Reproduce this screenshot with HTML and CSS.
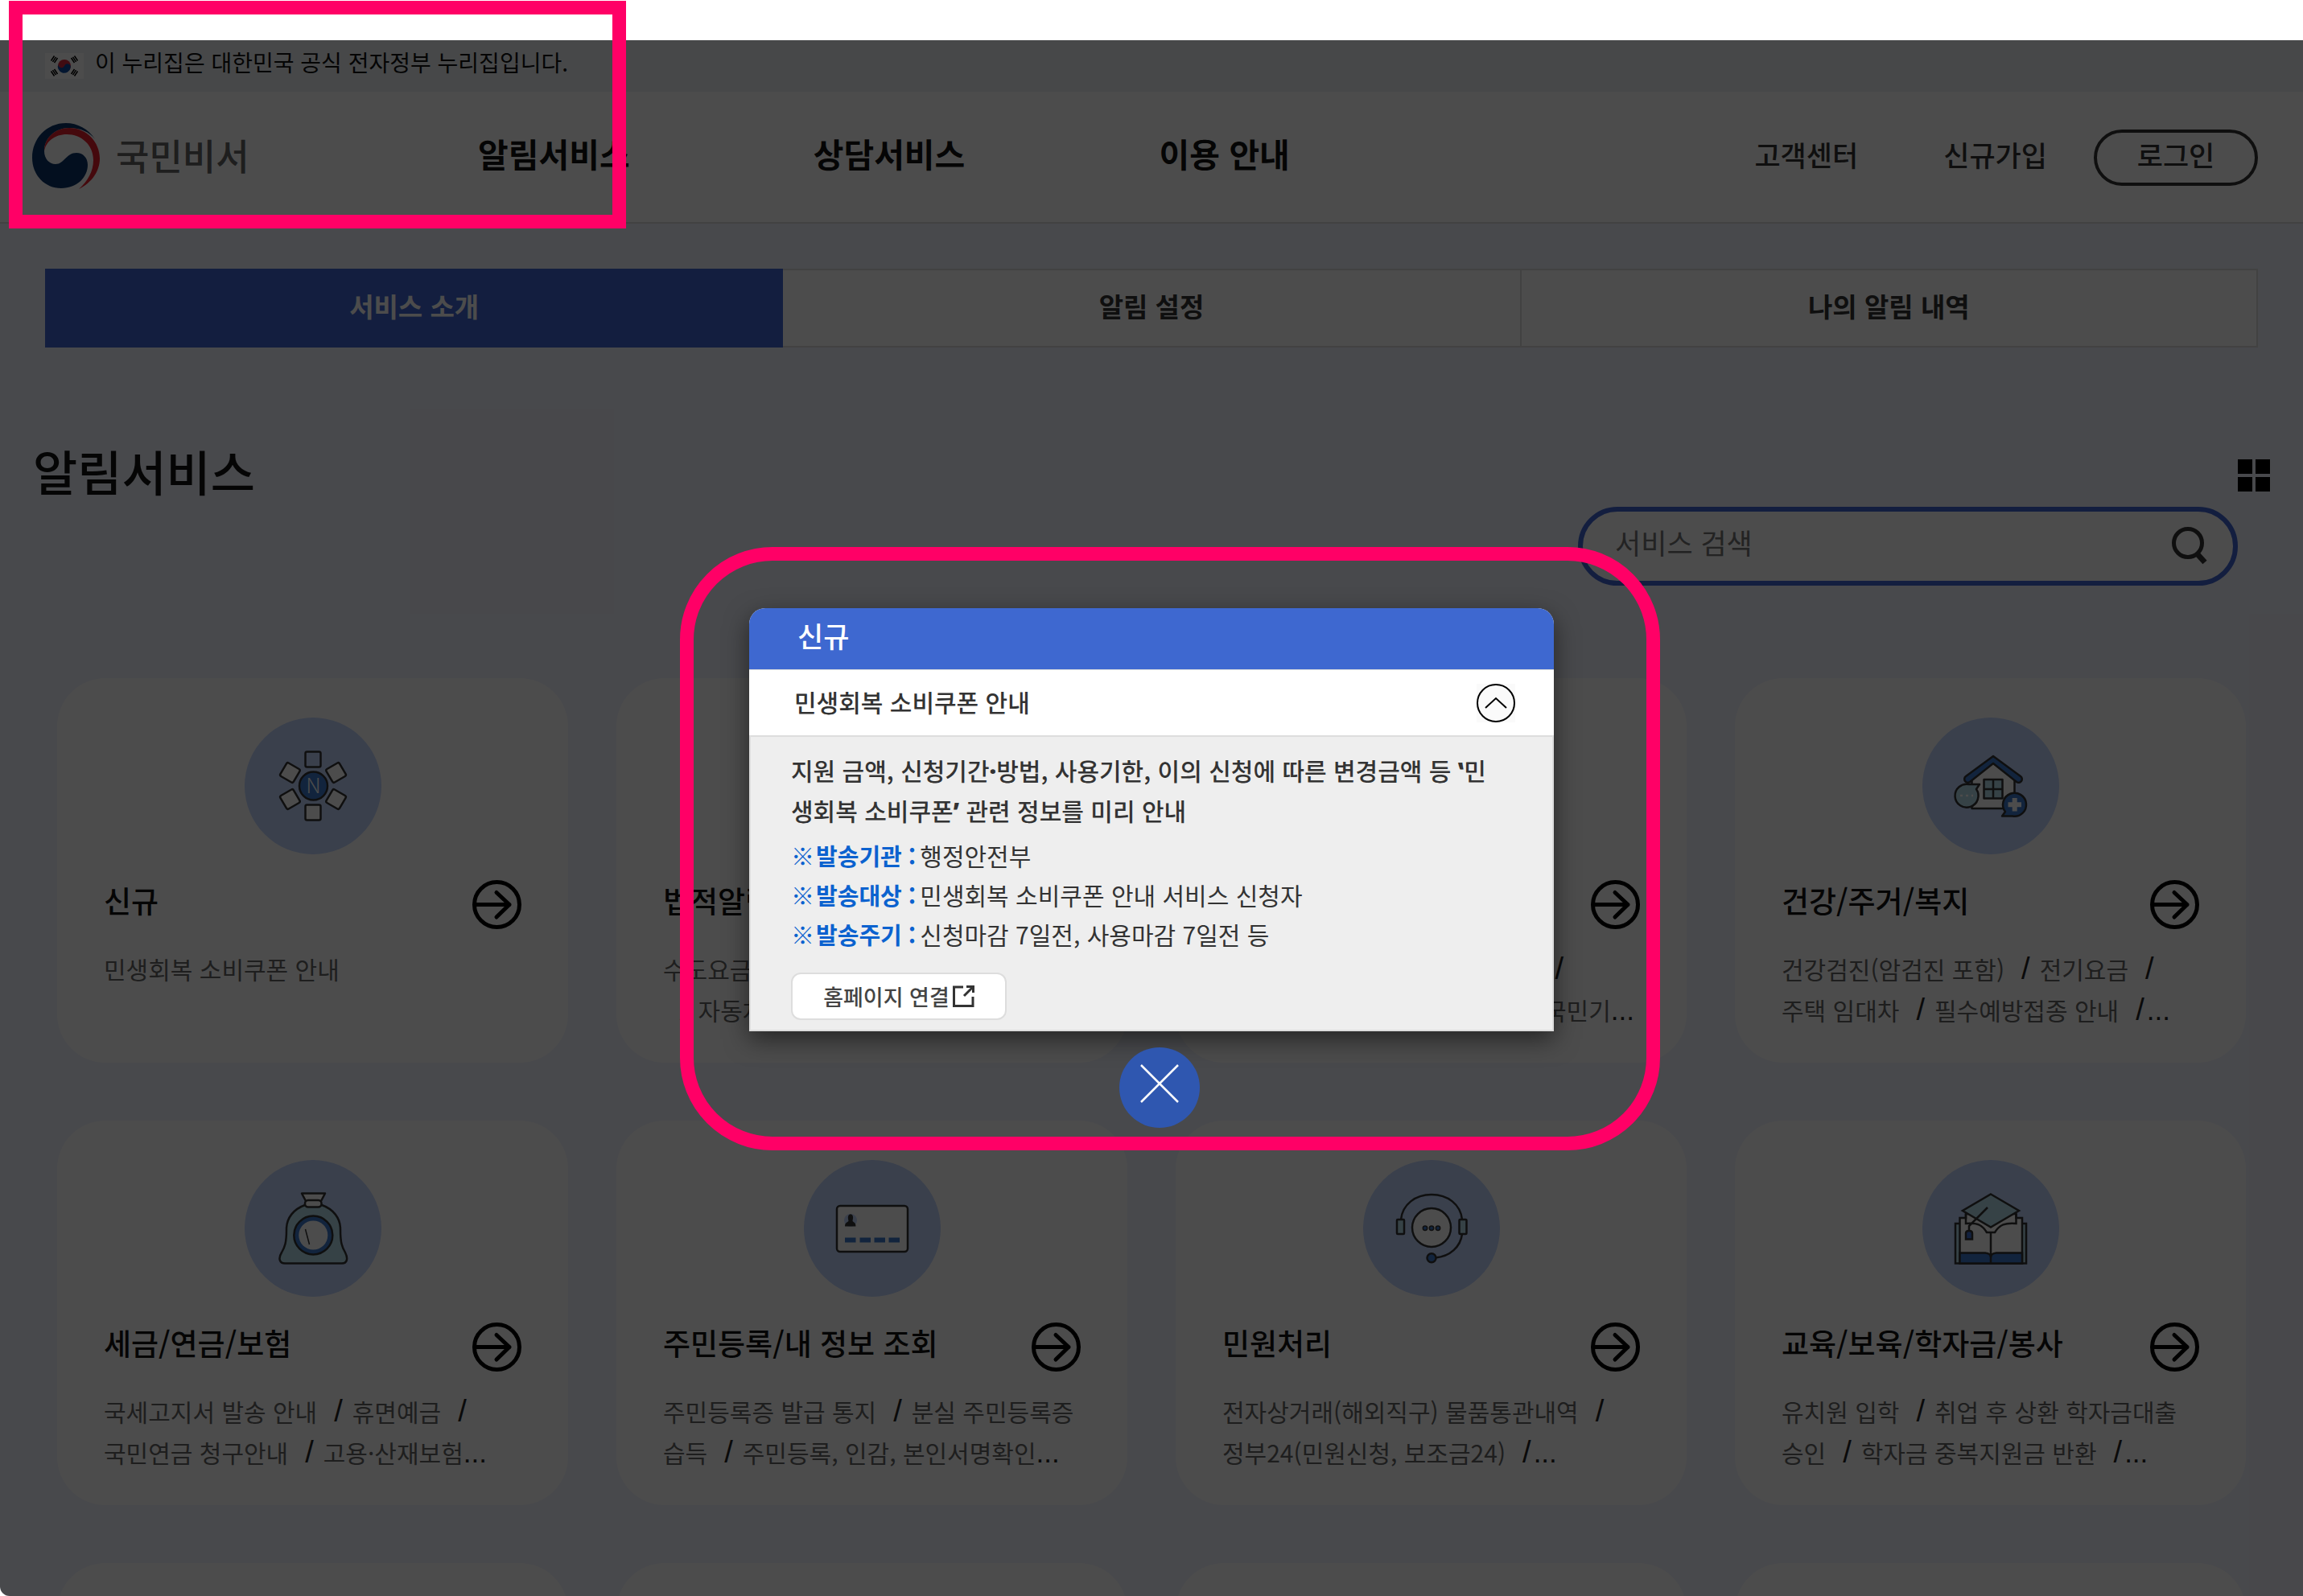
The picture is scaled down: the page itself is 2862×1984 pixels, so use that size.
FILE: index.html
```html
<!DOCTYPE html>
<html lang="ko">
<head>
    <meta charset="utf-8">
    <title>국민비서 - 알림서비스</title>
    <link rel="stylesheet" href="styles.css">
</head>
<body>
    <svg width="0" height="0" class="defs" aria-hidden="true">
        <symbol id="arrow" viewBox="0 0 61 61">
            <g fill="none" stroke="#000" stroke-width="5" stroke-linecap="round" stroke-linejoin="round">
                <circle cx="30.500" cy="30.500" r="28"/>
                <path d="M4 30.500H46M30 15.500L46 30.500L30 46"/>
            </g>
        </symbol>
    </svg>

    <div class="site">
        <div class="gov-bar">
            <svg class="flag" viewBox="0 0 48 32" aria-hidden="true">
                <rect width="48" height="32" fill="#fff"/>
                <circle cx="24" cy="16" r="8" fill="#d62b3f"/>
                <path d="M16.500 13.500A4 4 0 0 0 24 16A4 4 0 0 1 31.700 18A8 8 0 1 1 16.500 13.500Z" fill="#0b4ba0"/>
                <g stroke="#000" stroke-width="1.500">
                    <path d="M7.500 9.500L11.500 3.500M9.500 10.800L13.500 4.800M11.500 12L15.500 6"/>
                    <path d="M40.500 9.500L36.500 3.500M38.500 10.800L34.500 4.800M36.500 12L32.500 6"/>
                    <path d="M7.500 22.500L11.500 28.500M9.500 21.200L13.500 27.200M11.500 20L15.500 26"/>
                    <path d="M40.500 22.500L36.500 28.500M38.500 21.200L34.500 27.200M36.500 20L32.500 26"/>
                </g>
            </svg>
            <span>이 누리집은 대한민국 공식 전자정부 누리집입니다.</span>
        </div>

        <header class="header">
            <a class="logo" href="#">
                <svg class="logo-mark" viewBox="0 0 84 84" aria-hidden="true">
                    <path fill="#0b3568" d="M78 20C70 7 56 0 42 0C18 0 0 19 0 43C0 65 16 81 36 81C56 81 69 67 69 52C69 43 63 37 55 37C42 37 40 51 29 51C21 51 15 44 15 35C15 18 29 6 46 6C60 6 71 11 78 20Z"/>
                    <path fill="#e6202c" d="M15 35C15 18 29 6 46 6C68 6 84 24 84 44C84 60 74 74 58 82C69 72 76 60 76 46C76 27 61 14 43 14C28 14 17 23 15 35Z"/>
                </svg>
                <span>국민비서</span>
            </a>
            <nav class="nav">
                <a href="#">알림서비스</a>
                <a href="#">상담서비스</a>
                <a href="#">이용 안내</a>
            </nav>
            <div class="util">
                <a href="#">고객센터</a>
                <a href="#">신규가입</a>
                <button class="login" type="button">로그인</button>
            </div>
        </header>

        <main class="main">
            <nav class="tabs">
                <a class="tab active" href="#">서비스 소개</a>
                <a class="tab" href="#">알림 설정</a>
                <a class="tab" href="#">나의 알림 내역</a>
            </nav>

            <div class="title-row">
                <h1>알림서비스</h1>
                <button class="grid-button" type="button" aria-label="전체 보기">
                    <svg viewBox="0 0 40 40"><path d="M0 0h18v18H0zM22 0h18v18H22zM0 22h18v18H0zM22 22h18v18H22z"/></svg>
                </button>
            </div>

            <form class="search">
                <input type="text" placeholder="서비스 검색" aria-label="서비스 검색">
                <button type="button" aria-label="검색">
                    <svg viewBox="0 0 44 48" fill="none" stroke="#333">
                        <circle cx="20" cy="20" r="17.500" stroke-width="5"/>
                        <path d="M31 33L41 44" stroke-width="7"/>
                    </svg>
                </button>
            </form>

            <div class="cards">
                <section class="card">
                    <svg class="card-icon" viewBox="0 0 170 170" fill="#fff" stroke="#333" stroke-width="2.500">
                        <rect x="75.500" y="42.500" width="19" height="19" rx="2" fill="#c1d5fd"/>
                        <rect x="75.500" y="42.500" width="19" height="19" rx="2" transform="rotate(60 85 85)"/>
                        <rect x="75.500" y="42.500" width="19" height="19" rx="2" transform="rotate(120 85 85)"/>
                        <rect x="75.500" y="42.500" width="19" height="19" rx="2" transform="rotate(180 85 85)"/>
                        <rect x="75.500" y="42.500" width="19" height="19" rx="2" transform="rotate(240 85 85)"/>
                        <rect x="75.500" y="42.500" width="19" height="19" rx="2" transform="rotate(300 85 85)"/>
                        <circle cx="85.500" cy="85" r="17.500" fill="#3d7acc"/>
                        <text class="icon-letter" x="85.500" y="94" stroke="none">N</text>
                    </svg>
                    <div class="card-head">
                        <h2>신규</h2>
                        <a href="#" aria-label="신규 보기"><svg><use href="#arrow"/></svg></a>
                    </div>
                    <p>민생회복 소비쿠폰 안내</p>
                </section>

                <section class="card">
                    <svg class="card-icon" viewBox="0 0 170 170"></svg>
                    <div class="card-head">
                        <h2>법적알림</h2>
                        <a href="#" aria-label="법적알림 보기"><svg><use href="#arrow"/></svg></a>
                    </div>
                    <p>수도요금<br><i class="slash">/</i>자동차</p>
                </section>

                <section class="card">
                    <svg class="card-icon" viewBox="0 0 170 170"></svg>
                    <div class="card-head">
                        <a href="#" aria-label="교통 보기"><svg><use href="#arrow"/></svg></a>
                    </div>
                    <p>교통범칙금 과태료 통지 안내 등<i class="slash">/</i><br>운전면허 적성검사 갱신 안내<i class="slash">/</i>국민기<i class="more">...</i></p>
                </section>

                <section class="card">
                    <svg class="card-icon" viewBox="0 0 170 170" stroke="#333" stroke-width="2.500" stroke-linejoin="round">
                        <path fill="#fff" d="M61.500 70L88 52L114.500 70V113H61.500Z"/>
                        <path fill="#3d7acc" d="M88 48L54 73A4 4 0 0 0 59 80L88 57L117 80A4 4 0 0 0 122 73Z"/>
                        <path fill="#b4dcec" d="M76.500 77H99.500V100.500H76.500ZM88 77V100.500M76.500 89H99.500"/>
                        <path fill="#b4dcec" d="M58 83H71L67 89A14.500 14.500 0 1 1 58 83Z"/>
                        <path fill="#3d7acc" d="M112 122.500H99L103 117A14.500 14.500 0 1 1 112 122.500Z"/>
                        <path fill="none" stroke="#fff" stroke-width="6" stroke-linejoin="miter" d="M114.700 100V116.500M106.500 108.200H123"/>
                        <path fill="none" stroke="#fff" stroke-dasharray="3 4" d="M47 97H63"/>
                    </svg>
                    <div class="card-head">
                        <h2>건강/주거/복지</h2>
                        <a href="#" aria-label="건강/주거/복지 보기"><svg><use href="#arrow"/></svg></a>
                    </div>
                    <p>건강검진(암검진 포함)<i class="slash">/</i>전기요금<i class="slash">/</i><br>주택 임대차<i class="slash">/</i>필수예방접종 안내<i class="slash last">/</i><i class="more">...</i></p>
                </section>

                <section class="card">
                    <svg class="card-icon" viewBox="0 0 170 170" fill="none" stroke="#333" stroke-width="2.500" stroke-linejoin="round">
                        <path fill="#b4dcec" d="M75 56C61 61 52 72 52 86C52 103 50 108 46 115C41 123 44 128.500 50 128.500H121C127 128.500 129 123 125 115C121 108 119 103 119 86C119 72 110 61 96 56Z"/>
                        <path fill="#fff" d="M71 41.500H100L95 51H76Z"/>
                        <rect x="75" y="50" width="20.500" height="8.500" rx="4" fill="#fff"/>
                        <circle cx="85.300" cy="93.500" r="24" fill="#3d7acc"/>
                        <circle cx="85.300" cy="93.500" r="18" fill="#fff" stroke="none"/>
                        <path stroke-width="1.500" d="M75.500 86L80.500 105"/>
                    </svg>
                    <div class="card-head">
                        <h2>세금/연금/보험</h2>
                        <a href="#" aria-label="세금/연금/보험 보기"><svg><use href="#arrow"/></svg></a>
                    </div>
                    <p>국세고지서 발송 안내<i class="slash">/</i>휴면예금<i class="slash">/</i><br>국민연금 청구안내<i class="slash">/</i>고용·산재보험<i class="more">...</i></p>
                </section>

                <section class="card">
                    <svg class="card-icon" viewBox="0 0 170 170">
                        <rect x="41" y="57" width="88" height="57" rx="4" fill="#fff" stroke="#333" stroke-width="2.500"/>
                        <circle cx="58" cy="75" r="8" fill="#c1d5fd"/>
                        <path fill="#333" d="M51 82.500C51 77 55 77.500 55.500 75.500C54 70 55.500 67.500 58 67.500C60.500 67.500 62 70 60.500 75.500C61 77.500 64.500 77 64.500 82.500Z"/>
                        <path fill="#3d7acc" d="M51 96.500h13.500v6H51zM69.500 96.500H83v6H69.500zM87.500 96.500H101v6H87.500zM105.500 96.500H119v6h-13.500z"/>
                    </svg>
                    <div class="card-head">
                        <h2>주민등록/내 정보 조회</h2>
                        <a href="#" aria-label="주민등록/내 정보 조회 보기"><svg><use href="#arrow"/></svg></a>
                    </div>
                    <p>주민등록증 발급 통지<i class="slash">/</i>분실 주민등록증<br>습득<i class="slash">/</i>주민등록, 인감, 본인서명확인<i class="more">...</i></p>
                </section>

                <section class="card">
                    <svg class="card-icon" viewBox="0 0 170 170" fill="none" stroke="#333" stroke-width="2.500">
                        <path d="M47 74C49 55 65 43 85 43C105 43 121 55 123 74M123 92C121 108 108 120 90 121.500"/>
                        <circle cx="85" cy="84" r="24" fill="#fff"/>
                        <rect x="42" y="74" width="9" height="18" rx="1" fill="#b4dcec"/>
                        <rect x="119.500" y="74" width="9" height="18" rx="1" fill="#b4dcec"/>
                        <circle cx="85" cy="121.700" r="5.500" fill="#3d7acc"/>
                        <g fill="#3d7acc" stroke-width="1.500">
                            <circle cx="77" cy="84.700" r="2.700"/>
                            <circle cx="85" cy="84.700" r="2.700"/>
                            <circle cx="93" cy="84.700" r="2.700"/>
                        </g>
                    </svg>
                    <div class="card-head">
                        <h2>민원처리</h2>
                        <a href="#" aria-label="민원처리 보기"><svg><use href="#arrow"/></svg></a>
                    </div>
                    <p>전자상거래(해외직구) 물품통관내역<i class="slash">/</i><br>정부24(민원신청, 보조금24)<i class="slash last">/</i><i class="more">...</i></p>
                </section>

                <section class="card">
                    <svg class="card-icon" viewBox="0 0 170 170" fill="#fff" stroke="#333" stroke-width="2.500">
                        <rect x="41" y="79" width="88" height="49.500" fill="#b4dcec"/>
                        <path d="M46.500 72H54V67H116.500V72H124V128.500H46.500Z"/>
                        <path fill="#3d7acc" d="M46.500 115.500H78Q85 116 85 121Q85 116 92 115.500H124V128.500H46.500Z"/>
                        <path fill="none" d="M54 67V79C68 78 74 80 80 90H90C96 80 103 78 116.500 79V67M85 90V128.500"/>
                        <path fill="#b4dcec" d="M85 42.500L120 63L85 83.500L50 63Z"/>
                        <path fill="none" d="M81 59L58 82V88"/>
                        <path fill="#3d6fd0" d="M54 98.500V91Q54 88 58 88Q62 88 62 91V98.500Z"/>
                    </svg>
                    <div class="card-head">
                        <h2>교육/보육/학자금/봉사</h2>
                        <a href="#" aria-label="교육/보육/학자금/봉사 보기"><svg><use href="#arrow"/></svg></a>
                    </div>
                    <p>유치원 입학<i class="slash">/</i>취업 후 상환 학자금대출<br>승인<i class="slash">/</i>학자금 중복지원금 반환<i class="slash last">/</i><i class="more">...</i></p>
                </section>

                <section class="card"></section>
                <section class="card"></section>
                <section class="card"></section>
                <section class="card"></section>
            </div>
        </main>

        <!-- popup -->
        <div class="dim">
            <div class="popup" role="dialog" aria-labelledby="popup-title">
                <h2 class="popup-title" id="popup-title">신규</h2>
                <div class="popup-item">
                    <h3>민생회복 소비쿠폰 안내</h3>
                    <button class="fold" type="button" aria-label="접기">
                        <svg viewBox="0 0 48 48" fill="none" stroke="#000" stroke-width="2">
                            <circle cx="24" cy="24" r="23"/>
                            <path d="M11 30L24 18L37 30"/>
                        </svg>
                    </button>
                </div>
                <div class="popup-body">
                    <p class="lead">지원 금액, 신청기간<span class="mark">·</span>방법, 사용기한, 이의 신청에 따른 변경금액 등 <span class="mark">‛</span>민<br>생회복 소비쿠폰<span class="mark">’</span> 관련 정보를 미리 안내</p>
                    <dl>
                        <div><dt><span>※</span> 발송기관 :</dt><dd>행정안전부</dd></div>
                        <div><dt><span>※</span> 발송대상 :</dt><dd>민생회복 소비쿠폰 안내 서비스 신청자</dd></div>
                        <div><dt><span>※</span> 발송주기 :</dt><dd>신청마감 7일전, 사용마감 7일전 등</dd></div>
                    </dl>
                    <a class="home-link" href="#">
                        홈페이지 연결
                        <svg viewBox="0 0 27 27" fill="none" stroke="#333" stroke-width="3">
                            <path d="M13 2H1.500V25.500H25V14M17 1.500H25.500V9M25 2L14 13"/>
                        </svg>
                    </a>
                </div>
            </div>
            <button class="close" type="button" aria-label="닫기">
                <svg viewBox="0 0 48 48" stroke="#fff" stroke-width="2.500"><path d="M1 1L47 47M47 1L1 47"/></svg>
            </button>
        </div>
    </div>

    <!-- highlights -->
    <div class="highlight highlight-logo"></div>
    <div class="highlight highlight-popup"></div>
</body>
</html>
```

FILE: styles.css
```css
* {
    box-sizing: border-box;
}

body {
    margin: 0;
    padding-top: 50px;
    height: 100vh;
    overflow: hidden;
    position: relative;
    background: #fff;
    color: #111;
    font-family: "Noto Sans CJK KR", "Noto Sans", sans-serif;
}

h1, h2, h3, p, dl, dd {
    margin: 0;
}

a {
    color: inherit;
    text-decoration: none;
}

button {
    padding: 0;
    border: 0;
    background: none;
    font-family: inherit;
    cursor: pointer;
}

svg {
    display: block;
}

.defs {
    position: absolute;
}

.site {
    position: relative;
    height: 100%;
    overflow: hidden;
    background: #f0f3fd;
    border-bottom-left-radius: 12px;
}

/* top */
.gov-bar {
    display: flex;
    align-items: center;
    gap: 14px;
    height: 64px;
    padding: 0 56px;
    background: #edf2f6;
    font-size: 28px;
    line-height: 52px;
}

.gov-bar span {
    height: 62px;
}

.flag {
    width: 48px;
    height: 32px;
}

.header {
    display: flex;
    align-items: center;
    height: 164px;
    padding: 0 56px 0 40px;
    background: #fff;
    border-bottom: 2px solid #ddd;
}

.logo {
    display: flex;
    align-items: center;
    gap: 20px;
    width: 440px;
    color: #666;
    font-size: 45px;
    font-weight: 500;
    line-height: 60px;
}

.logo span {
    padding-bottom: 4px;
}

.logo-mark {
    width: 84px;
    height: 84px;
}

.nav {
    display: grid;
    grid-template-columns: repeat(3, 1fr);
    flex: 0 1 1250px;
    text-align: center;
    font-size: 41px;
    font-weight: 700;
    line-height: 60px;
    padding-bottom: 10px;
}

.util {
    display: flex;
    align-items: center;
    gap: 58px;
    margin-left: auto;
    color: #333;
    font-size: 35px;
    font-weight: 500;
    line-height: 60px;
}

.util a {
    padding-bottom: 6px;
}

.util a:first-child {
    margin-right: 48px;
}

.login {
    width: 204px;
    height: 70px;
    margin-top: 2px;
    padding-bottom: 8px;
    border: 4px solid #333;
    border-radius: 35px;
    color: #333;
    font-size: 35px;
    font-weight: 500;
    line-height: 54px;
}

/* content */
.main {
    padding: 56px 41px 0;
}

.tabs {
    display: grid;
    grid-template-columns: repeat(3, 1fr);
    margin: 0 15px;
    background: #fff;
    border: 2px solid #ddd;
}

.tab {
    height: 94px;
    border-left: 2px solid #ddd;
    text-align: center;
    color: #333;
    font-size: 33px;
    font-weight: 700;
    line-height: 88px;
}

.tab.active {
    margin: -2px 0 -2px -2px;
    height: 98px;
    border: 0;
    background: #4067d2;
    color: #fff;
    line-height: 92px;
}

.tab.active + .tab {
    border-left: 0;
}

.title-row {
    display: flex;
    align-items: center;
    justify-content: space-between;
    margin-top: 113px;
}

h1 {
    font-size: 60px;
    font-weight: 500;
    line-height: 80px;
}

.grid-button {
    width: 40px;
    margin-top: 12px;
}

.search {
    display: flex;
    align-items: center;
    width: 820px;
    height: 98px;
    margin: 5px 40px 0 auto;
    padding: 0 32px 0 40px;
    background: #fff;
    border: 6px solid #4067d2;
    border-radius: 49px;
}

.search input {
    flex: 1;
    min-width: 0;
    height: 70px;
    padding: 0 0 12px;
    border: 0;
    outline: 0;
    background: none;
    font-family: inherit;
    font-size: 35px;
}

.search input::placeholder {
    color: #757575;
}

.search button {
    width: 44px;
}

.cards {
    display: grid;
    grid-template-columns: repeat(4, minmax(0, 1fr));
    grid-auto-rows: 478px;
    gap: 72px 60px;
    padding: 115px 30px 0;
}

.card {
    padding: 49px 58px 0;
    background: #fff;
    border-radius: 60px;
}

.card-icon {
    width: 170px;
    height: 170px;
    margin: 0 auto 32px;
    border-radius: 50%;
    background: #c1d5fd;
}

.icon-letter {
    font-size: 26px;
    font-weight: 300;
    text-anchor: middle;
}

.card-head {
    display: flex;
    justify-content: space-between;
    height: 61px;
}

.card-head h2 {
    font-size: 37px;
    font-weight: 500;
    line-height: 50px;
}

.card-head a {
    margin-left: auto;
}

.card-head svg {
    width: 61px;
    height: 61px;
}

.card p {
    margin-top: 24px;
    color: #666;
    font-size: 30px;
    line-height: 51px;
    white-space: nowrap;
}

.slash,
.more {
    color: #222;
    font-family: "Liberation Sans", sans-serif;
    font-size: 38px;
    font-style: normal;
    line-height: 1px;
}

.slash {
    margin: 0 12px 0 21px;
}

.slash.last {
    margin-right: 3px;
}

.more {
    font-size: 35px;
}

/* popup */
.dim {
    position: absolute;
    inset: 0;
    display: flex;
    flex-direction: column;
    align-items: center;
    padding-top: 706px;
    background: rgba(0, 0, 0, 0.7);
}

.popup {
    width: 1000px;
    color: #333;
    background: #eee;
    border-radius: 20px 20px 0 0;
    box-shadow: 0 10px 30px rgba(0, 0, 0, 0.5);
}

.popup-title {
    height: 76px;
    padding-left: 60px;
    background: #3e68d0;
    border-radius: 20px 20px 0 0;
    color: #fff;
    font-size: 35px;
    font-weight: 500;
    line-height: 68px;
}

.popup-item {
    display: flex;
    align-items: center;
    justify-content: space-between;
    height: 82px;
    padding: 0 48px 0 56px;
    background: #fff;
    border-top: 1px solid #ddd;
}

.popup-item h3 {
    padding-bottom: 4px;
    font-size: 30px;
    font-weight: 500;
    line-height: 74px;
}

.fold {
    width: 48px;
    background: #fafafa;
}

.popup-body {
    padding: 17px 50px 12px;
    border: 2px solid #ddd;
    font-size: 30px;
    line-height: 49px;
    white-space: nowrap;
}

.lead {
    font-weight: 500;
    line-height: 48px;
}

.mark {
    font-family: "Open Sans", sans-serif;
    font-weight: 800;
}

.popup-body dl {
    margin: 6px 0 23px;
}

.popup-body dl div {
    display: flex;
}

.popup-body dt {
    display: flex;
    gap: 2px;
    margin-right: 5px;
    color: #0b62cf;
    font-size: 29px;
    font-weight: 700;
}

.home-link {
    display: flex;
    align-items: center;
    justify-content: center;
    gap: 4px;
    width: 268px;
    height: 59px;
    background: #fff;
    border: 2px solid #ddd;
    border-radius: 12px;
    color: #444;
    font-size: 27px;
    font-weight: 500;
}

.home-link svg {
    width: 27px;
}

.close {
    display: flex;
    align-items: center;
    justify-content: center;
    width: 100px;
    height: 100px;
    margin: 20px 0 0 20px;
    padding-bottom: 10px;
    border-radius: 50%;
    background: #2f57b0;
}

.close svg {
    width: 48px;
}

.highlight {
    position: absolute;
    border: 17px solid #f06;
    pointer-events: none;
}

.highlight-logo {
    top: 1px;
    left: 11px;
    width: 767px;
    height: 283px;
}

.highlight-popup {
    top: 680px;
    left: 845px;
    width: 1218px;
    height: 750px;
    border-radius: 115px;
}
```
